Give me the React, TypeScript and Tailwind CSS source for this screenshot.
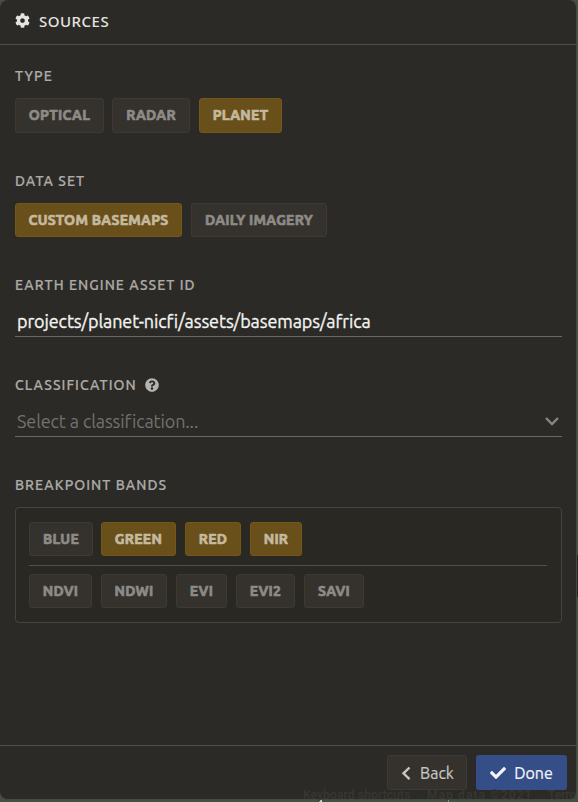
import type { ReactNode } from "react";
import { FaCog, FaQuestionCircle, FaCheck } from "react-icons/fa";

function Label({ children, className = "" }: { children: ReactNode; className?: string }) {
  return (
    <div className={`flex h-5 items-center whitespace-nowrap text-[14px] font-medium tracking-[1.03px] text-[#acaba8] [-webkit-text-stroke:0.2px_currentColor] ${className}`}>
      {children}
    </div>
  );
}

function Chip({ children, active = false, className }: { children: ReactNode; active?: boolean; className: string }) {
  return (
    <button
      className={`flex shrink-0 items-center justify-center whitespace-nowrap rounded-[3px] border text-[14px] font-bold tracking-[0.27px] [-webkit-text-stroke:0.7px_currentColor] ${
        active ? "border-[#765519] bg-[#69501b] text-[#c5b99f]" : "border-[#3d3a35] bg-[#35322d] text-[#8d8b87]"
      } ${className}`}
    >
      {children}
    </button>
  );
}

export default function App() {
  return (
    <div className="relative h-[802px] w-[578px] overflow-hidden bg-[#45513f] font-['Ubuntu','Noto_Sans',sans-serif]">
      <div className="absolute right-0 top-[555px] h-[42px] w-0.5 bg-[#25272a]" />
      <div className="absolute bottom-0 left-[319px] h-[3px] w-[3px] bg-[#d0d2ce]" />
      <div className="absolute bottom-0 left-[447px] h-[3px] w-0.5 bg-[#d0d2ce]" />
      <section className="relative flex h-[800px] w-[577px] flex-col overflow-hidden rounded-lg border-b border-r border-[#484842] bg-[#2b2a26]">
        <header className="flex h-[45px] shrink-0 items-center border-b border-[#4e4d49] pl-[15px] text-[#e5e4e1]">
          <FaCog className="mt-[-3px] size-[15px]" />
          <h1 className="ml-[9px] mt-[-2px] font-['Noto_Sans',sans-serif] text-[15px] font-medium leading-5 tracking-[0.5px]">SOURCES</h1>
        </header>

        <main className="h-[700px] shrink-0 pl-[15px] pt-[21px]">
          <Label>TYPE</Label>
          <div className="mt-3 flex h-[35px]">
            <Chip className="w-[89px]">OPTICAL</Chip>
            <Chip className="ml-2 w-[78px]">RADAR</Chip>
            <Chip active className="ml-[9px] w-[83px]">PLANET</Chip>
          </div>

          <Label className="mt-[38px]">DATA SET</Label>
          <div className="mt-3 flex h-[34px]">
            <Chip active className="w-[167px]">CUSTOM BASEMAPS</Chip>
            <Chip className="ml-[9px] w-[136px]">DAILY IMAGERY</Chip>
          </div>

          <Label className="mt-[38px]">EARTH ENGINE ASSET ID</Label>
          <div className="mt-3 flex h-[30px] w-[547px] items-center border-b border-[#696865] pl-0.5 text-[18px] tracking-[-0.11px] text-[#f4f4f2] [-webkit-text-stroke:0.3px_currentColor]">
            projects/planet-nicfi/assets/basemaps/africa
          </div>

          <Label className="mt-[38px]">
            CLASSIFICATION
            <FaQuestionCircle className="ml-2 size-[14px] text-[#b5b4b1]" />
          </Label>
          <div className="mt-3 flex h-[30px] w-[547px] items-center justify-between border-b border-[#696865] pl-0.5 pr-[3px] text-[18px] tracking-[-0.12px] text-[#73726e]">
            Select a classification...
            <svg className="size-[14px]" viewBox="0 0 14 14" fill="none" stroke="#888783" strokeWidth="2.3">
              <path d="M1 3 7 9l6-6" />
            </svg>
          </div>

          <Label className="mt-[38px]">BREAKPOINT BANDS</Label>
          <div className="mt-3 h-[116px] w-[547px] rounded-[4px] border border-[#454540] bg-[#292823] px-[13px] pt-[14px]">
            <div className="flex h-[34px]">
              <Chip className="w-16">BLUE</Chip>
              <Chip active className="ml-2 w-[75px]">GREEN</Chip>
              <Chip active className="ml-[9px] w-14">RED</Chip>
              <Chip active className="ml-[9px] w-[52px]">NIR</Chip>
            </div>
            <div className="mt-[9px] h-px w-[518px] bg-[#51504b]" />
            <div className="mt-2 flex h-[34px]">
              <Chip className="w-[63px]">NDVI</Chip>
              <Chip className="ml-[9px] w-[66px]">NDWI</Chip>
              <Chip className="ml-[9px] w-[51px]">EVI</Chip>
              <Chip className="ml-[9px] w-[59px]">EVI2</Chip>
              <Chip className="ml-[9px] w-[60px]">SAVI</Chip>
            </div>
          </div>
        </main>

        <footer className="flex h-[55px] shrink-0 justify-end border-t border-[#51504b] pr-[9px] pt-[9px] text-[16px]">
          <button className="flex h-[35px] w-20 items-center rounded-[3px] border border-[#3d3a35] bg-[#35322d] pl-[13px] text-[#c7c6c3] [-webkit-text-stroke:0.2px_currentColor]">
            <svg className="mr-2 h-[14px] w-[11px]" viewBox="0 0 11 14" fill="none" stroke="currentColor" strokeWidth="2.4">
              <path d="M8.5 1.5 2.5 7.3l6 5.8" />
            </svg>
            Back
          </button>
          <button className="ml-[9px] flex h-[35px] w-[91px] items-center justify-center rounded-[3px] bg-[#364e87] text-[#f3f5f9] [-webkit-text-stroke:0.2px_currentColor]">
            <FaCheck className="mr-2 size-4" />
            Done
          </button>
        </footer>
      </section>
      <div className="absolute left-[303px] top-[789px] flex whitespace-nowrap font-['Roboto',sans-serif] text-[12px] font-medium leading-[13px] text-[#383733]">
        <span className="w-[124px] tracking-[0.15px]">Keyboard shortcuts</span>
        <span className="w-[121px] tracking-[1.1px]">Map data ©2021</span>
        <span>Term</span>
      </div>
    </div>
  );
}
